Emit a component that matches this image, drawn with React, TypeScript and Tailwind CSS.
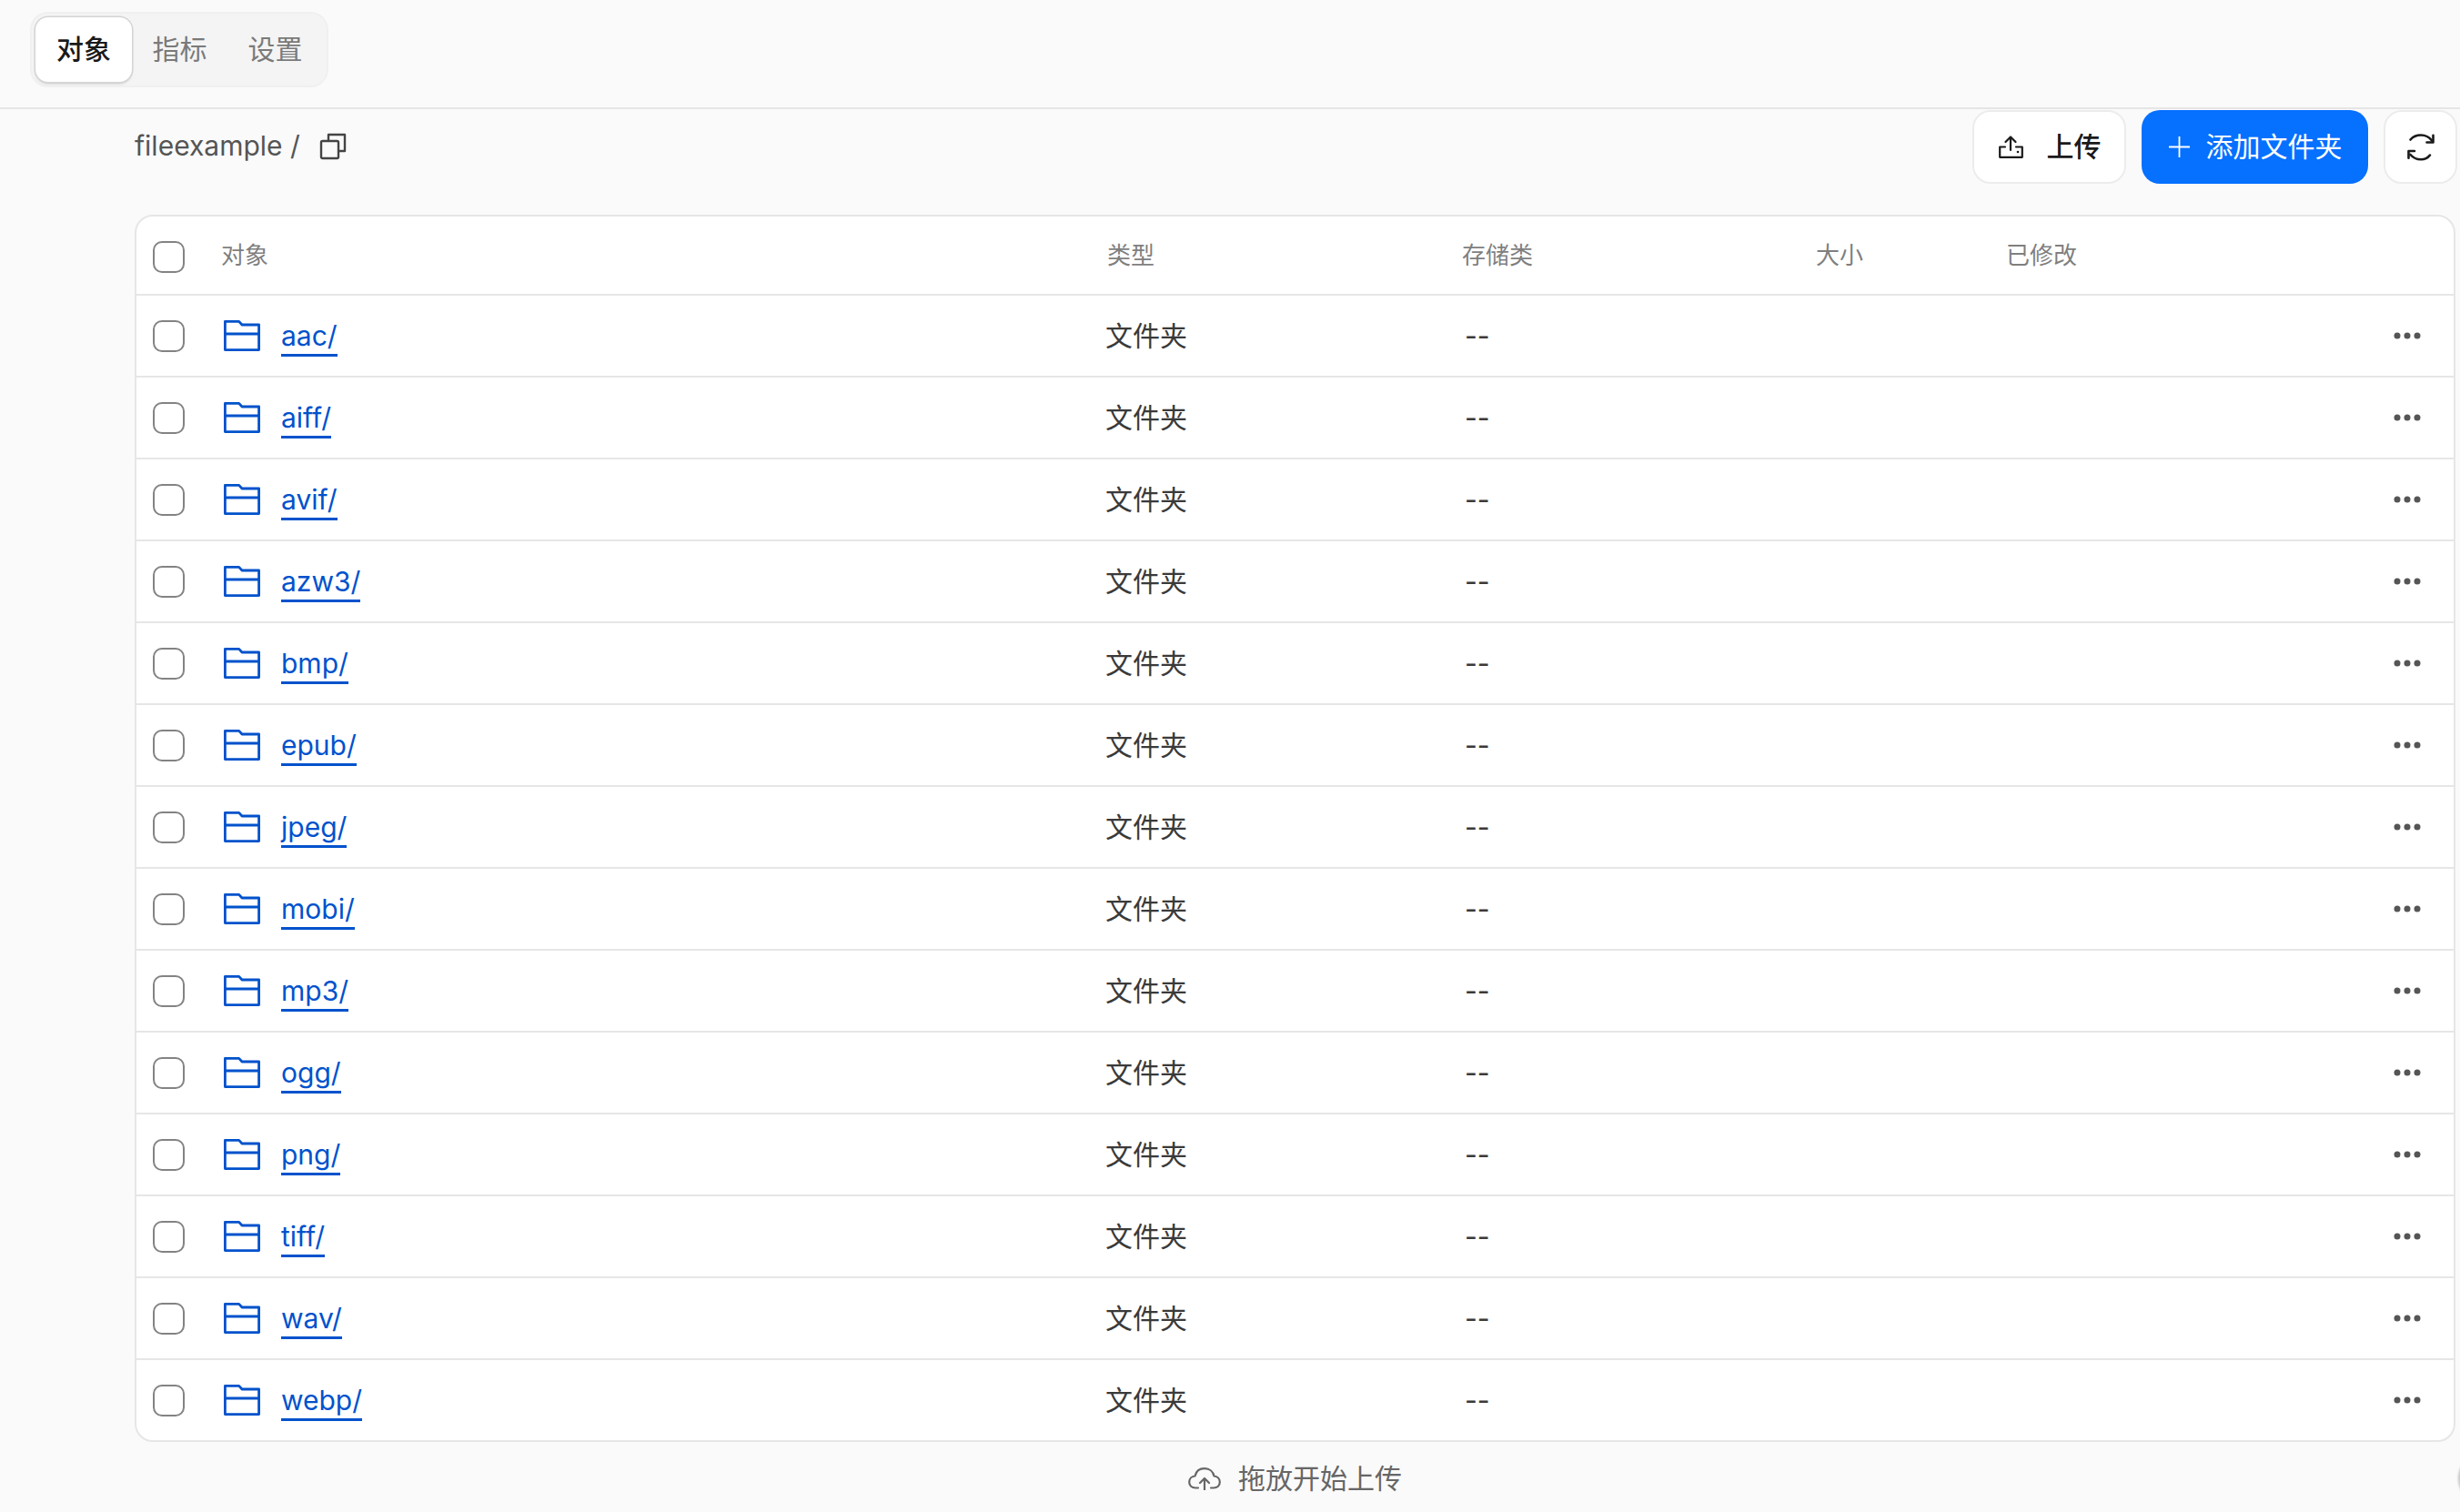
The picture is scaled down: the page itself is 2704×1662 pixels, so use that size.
const FONT = "font-['Inter','Noto_Sans_CJK_SC',sans-serif]";

const folders = ["aac/", "aiff/", "avif/", "azw3/", "bmp/", "epub/", "jpeg/", "mobi/", "mp3/", "ogg/", "png/", "tiff/", "wav/", "webp/"];

const COLS = "grid grid-cols-[93px_972px_392px_389px_209px_1fr] items-center";

function Check({ className = "" }: { className?: string }) {
  return <span className={`ml-[18px] block w-[35px] h-[35px] rounded-[10px] border-2 border-[#838383] bg-white ${className}`} />;
}

function FolderIcon() {
  return (
    <svg width="40" height="34" viewBox="0 0 40 34" fill="none" stroke="#0052cc" strokeWidth="2.8" strokeLinejoin="round" className="shrink-0">
      <path d="M1.4 1.4H16.7L20 5H38.6V32.6H1.4Z" />
      <path d="M1.4 15H38.6" />
    </svg>
  );
}

function Dots() {
  return (
    <svg width="30" height="8" viewBox="0 0 30 8" fill="#555555">
      <circle cx="4" cy="4" r="3.5" />
      <circle cx="15" cy="4" r="3.5" />
      <circle cx="26" cy="4" r="3.5" />
    </svg>
  );
}

export default function App() {
  return (
    <div className={`${FONT} relative w-[2704px] h-[1662px] overflow-hidden bg-[#fafafa]`}>
      <header className="h-[120px] border-b-2 border-[#e6e6e6] pt-[13px] pl-[33px]">
        <div className="inline-flex h-[83px] w-[328px] items-center rounded-[20px] border-2 border-[#f0f0f0] bg-[#f4f4f4] pl-[4px]">
          <div className="flex h-[71px] w-[106px] items-center justify-center rounded-[14px] bg-white text-[30px] font-medium text-[#1a1a1a] shadow-[0_0_0_1.5px_#d4d4d4,0_2px_3px_rgba(0,0,0,0.18)]">对象</div>
          <div className="flex h-[71px] w-[105px] items-center justify-center text-[30px] text-[#7a7a7a]">指标</div>
          <div className="flex h-[71px] w-[105px] items-center justify-center text-[30px] text-[#7a7a7a]">设置</div>
        </div>
      </header>

      <main className="pl-[148px]">
        <div className="flex h-[116px] items-start justify-between pr-[3px]">
          <div className="flex h-[81px] items-center text-[30px] text-[#555555]">
            <span>fileexample /</span>
            <svg width="30" height="30" viewBox="0 0 30 30" fill="none" stroke="#444444" strokeWidth="2.4" strokeLinejoin="round" className="ml-[21px]">
              <path d="M10 9V2H28V20H21" />
              <rect x="2" y="9" width="19" height="19" rx="1.5" />
            </svg>
          </div>
          <div className="flex gap-[17px] pt-[1px]">
            <button className="flex h-[81px] w-[169px] items-center justify-center gap-[26px] rounded-[20px] border-2 border-[#ececec] bg-white pl-[1px] text-[30px] font-medium text-[#1a1a1a]">
              <svg width="27" height="25" viewBox="0 0 27 25" fill="none" stroke="#1a1a1a" strokeWidth="2.2" strokeLinejoin="round" strokeLinecap="round">
                <path d="M7 12.5H1.2V23.8H25.8V12.5H19" />
                <path d="M13 16V1.5M7.5 7 13 1.5 18.5 7" />
                <circle cx="21" cy="18" r="1.3" fill="#1a1a1a" stroke="none" />
              </svg>
              <span>上传</span>
            </button>
            <button className="flex h-[81px] w-[249px] items-center justify-center gap-[18px] rounded-[20px] bg-[#0670ff] pl-[1px] text-[30px] text-white">
              <svg width="23" height="23" viewBox="0 0 23 23" fill="none" stroke="#ffffff" strokeWidth="1.8">
                <path d="M11.5 0V23M0 11.5H23" />
              </svg>
              <span>添加文件夹</span>
            </button>
            <button className="flex h-[81px] w-[81px] items-center justify-center rounded-[20px] border-2 border-[#ececec] bg-white">
              <svg width="30" height="30" viewBox="0 0 30 30" fill="none" stroke="#1a1a1a" strokeWidth="2.6" strokeLinecap="round" strokeLinejoin="round">
                <path d="M3.5 6.5C6.5 3 10.5 1.5 15 1.5C19.5 1.5 24 3.5 27 7.5" />
                <path d="M28.5 1.8V9.5H21.5" />
                <path d="M25 23.5C22.5 26.8 19 28.3 15 28.3C10.5 28.3 6.5 26.5 3.5 23" />
                <path d="M8 19H1.5V26.8" />
              </svg>
            </button>
          </div>
        </div>

        <div className="mr-[5px] rounded-[20px] border-2 border-[#e6e6e6] bg-white">
          <div className={`${COLS} h-[87px] border-b-2 border-[#e6e6e6] text-[26px] text-[#7f7f7f]`}>
            <Check className="mt-[3px]" />
            <div>对象</div>
            <div className="pl-[2px]">类型</div>
            <div>存储类</div>
            <div>大小</div>
            <div>已修改</div>
          </div>
          {folders.map((name, i) => (
            <div key={name} className={`${COLS} ${i < folders.length - 1 ? "h-[90px] border-b-2 border-[#e6e6e6]" : "h-[88px]"}`}>
              <Check />
              <div className="flex items-center gap-[23px] pl-[3px]">
                <FolderIcon />
                <a className="mt-[3px] border-b-[3px] border-[#0052cc] text-[30px] leading-[40px] text-[#0052cc]">{name}</a>
              </div>
              <div className="text-[30px] text-[#3a3a3a]">文件夹</div>
              <div className="pl-[3px] text-[30px] text-[#3a3a3a]">--</div>
              <div />
              <div className="flex justify-end pr-[36px]">
                <Dots />
              </div>
            </div>
          ))}
        </div>
      </main>

      <footer className="flex h-[77px] items-center justify-center gap-[19px] pl-[148px] pr-[5px] pt-[3px] text-[30px] text-[#666666]">
        <svg width="36" height="25" viewBox="0 0 36 25" fill="none" stroke="#666666" strokeWidth="2.2" strokeLinecap="round" strokeLinejoin="round">
          <path d="M11 22.5H8C4 22.5 1.2 20 1.2 16C1.2 12.3 4 9.7 7.5 9.5C8.8 4 13 1.2 18 1.2C23.5 1.2 27.5 4.7 28.5 9.5C32 9.9 34.8 12.5 34.8 16C34.8 20 32 22.5 28 22.5H25" />
          <path d="M18 24.5V12.5M13 17 18 12 23 17" />
        </svg>
        <span>拖放开始上传</span>
      </footer>

      <div className="absolute left-[2702px] top-[1596px] h-[58px] w-[58px] rounded-full border-[3px] border-[#c4c4c4] bg-[#ececec] blur-[1px]" />
    </div>
  );
}
